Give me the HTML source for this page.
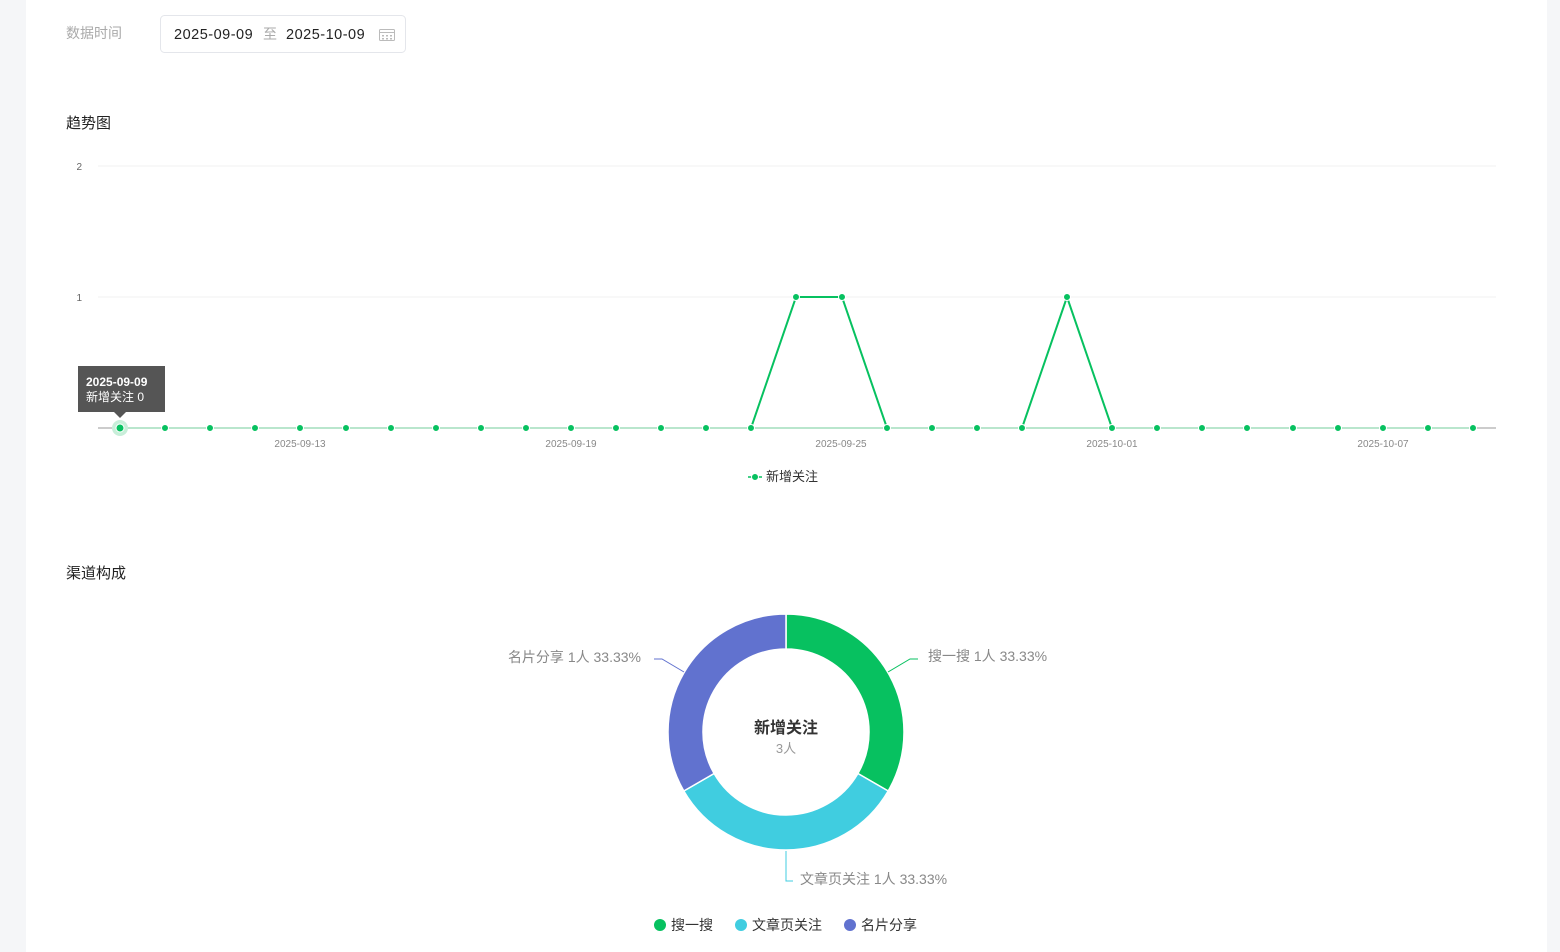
<!DOCTYPE html>
<html><head><meta charset="utf-8"><style>
body{margin:0;width:1560px;height:952px;background:#f5f6f8;font-family:"Liberation Sans","Noto Sans CJK SC",sans-serif;overflow:hidden}
.main{position:absolute;left:26px;top:0;width:1521px;height:952px;background:#fff}
</style></head><body>
<div class="main"></div>
<svg width="1560" height="952" style="position:absolute;left:0;top:0" font-family="Liberation Sans, Noto Sans CJK SC, sans-serif">
<text x="66" y="38" font-size="14" fill="#aaa">数据时间</text>
<rect x="160.5" y="15.5" width="245" height="37" rx="4" fill="#fff" stroke="#e4e6eb"/>
<text x="174" y="39" font-size="14.5" fill="#222" letter-spacing="0.5">2025-09-09</text>
<text x="263" y="39" font-size="14" fill="#aaa">至</text>
<text x="286" y="39" font-size="14.5" fill="#222" letter-spacing="0.5">2025-10-09</text>
<g stroke="#bbb" fill="none"><rect x="379.5" y="29.5" width="15" height="11" rx="1"/><line x1="379.5" y1="32.5" x2="394.5" y2="32.5"/></g>
<g fill="#bbb"><rect x="382" y="35" width="2" height="1.5"/><rect x="386" y="35" width="2" height="1.5"/><rect x="390" y="35" width="2" height="1.5"/><rect x="382" y="38" width="2" height="1.5"/><rect x="386" y="38" width="2" height="1.5"/><rect x="390" y="38" width="2" height="1.5"/></g>
<text x="66" y="128" font-size="15" fill="#222">趋势图</text>
<line x1="98" y1="166" x2="1496" y2="166" stroke="#f0f0f0"/>
<line x1="98" y1="297" x2="1496" y2="297" stroke="#f0f0f0"/>
<line x1="98" y1="428" x2="1496" y2="428" stroke="#bbb" stroke-width="1.5"/>
<text x="82" y="170" font-size="10" fill="#666" text-anchor="end">2</text>
<text x="82" y="301" font-size="10" fill="#666" text-anchor="end">1</text>
<g font-size="10" fill="#888" text-anchor="middle">
<text x="300" y="447">2025-09-13</text><text x="571" y="447">2025-09-19</text><text x="841" y="447">2025-09-25</text><text x="1112" y="447">2025-10-01</text><text x="1383" y="447">2025-10-07</text></g>
<line x1="120" y1="428" x2="1473" y2="428" stroke="#b9e6cd" stroke-width="2"/>
<polyline fill="none" stroke="#07c160" stroke-width="2" points="751,428 796,297 842,297 887,428"/>
<polyline fill="none" stroke="#07c160" stroke-width="2" points="1022,428 1067,297 1112,428"/>
<circle cx="120" cy="428" r="8" fill="#c8eed9"/>
<g fill="#07c160" stroke="#fff" stroke-width="1">
<circle cx="120" cy="428" r="4"/><circle cx="165" cy="428" r="3.5"/><circle cx="210" cy="428" r="3.5"/><circle cx="255" cy="428" r="3.5"/><circle cx="300" cy="428" r="3.5"/><circle cx="346" cy="428" r="3.5"/><circle cx="391" cy="428" r="3.5"/><circle cx="436" cy="428" r="3.5"/><circle cx="481" cy="428" r="3.5"/><circle cx="526" cy="428" r="3.5"/><circle cx="571" cy="428" r="3.5"/><circle cx="616" cy="428" r="3.5"/><circle cx="661" cy="428" r="3.5"/><circle cx="706" cy="428" r="3.5"/><circle cx="751" cy="428" r="3.5"/><circle cx="796" cy="297" r="3.5"/><circle cx="842" cy="297" r="3.5"/><circle cx="887" cy="428" r="3.5"/><circle cx="932" cy="428" r="3.5"/><circle cx="977" cy="428" r="3.5"/><circle cx="1022" cy="428" r="3.5"/><circle cx="1067" cy="297" r="3.5"/><circle cx="1112" cy="428" r="3.5"/><circle cx="1157" cy="428" r="3.5"/><circle cx="1202" cy="428" r="3.5"/><circle cx="1247" cy="428" r="3.5"/><circle cx="1293" cy="428" r="3.5"/><circle cx="1338" cy="428" r="3.5"/><circle cx="1383" cy="428" r="3.5"/><circle cx="1428" cy="428" r="3.5"/><circle cx="1473" cy="428" r="3.5"/></g>
<rect x="78" y="366" width="87" height="46" fill="#555"/>
<path d="M114,412 L120,418 L126,412Z" fill="#555"/>
<text x="86" y="386" font-size="12" font-weight="bold" fill="#fff">2025-09-09</text>
<text x="86" y="401" font-size="12" fill="#fff">新增关注 0</text>
<line x1="748" y1="477" x2="762" y2="477" stroke="#07c160" stroke-width="1.5"/><circle cx="755" cy="477" r="3.5" fill="#07c160" stroke="#fff"/>
<text x="766" y="481" font-size="13" fill="#333">新增关注</text>
<text x="66" y="578" font-size="15" fill="#222">渠道构成</text>
<g stroke="#fff" stroke-width="1.5">
<path d="M786,614 A118,118 0 0 1 888.2,791 L857.9,773.5 A83,83 0 0 0 786,649Z" fill="#07c160"/>
<path d="M888.2,791 A118,118 0 0 1 683.8,791 L714.1,773.5 A83,83 0 0 0 857.9,773.5Z" fill="#40cde0"/>
<path d="M683.8,791 A118,118 0 0 1 786,614 L786,649 A83,83 0 0 0 714.1,773.5Z" fill="#6172cf"/></g>
<polyline points="888,672 910,659 918,659" fill="none" stroke="#07c160"/>
<polyline points="684,672 662,659 654,659" fill="none" stroke="#6172cf"/>
<polyline points="786,851 786,881 793,881" fill="none" stroke="#40cde0"/>
<text x="928" y="661" font-size="14" fill="#888">搜一搜 1人 33.33%</text>
<text x="641" y="662" font-size="14" fill="#888" text-anchor="end">名片分享 1人 33.33%</text>
<text x="800" y="884" font-size="14" fill="#888">文章页关注 1人 33.33%</text>
<text x="786" y="733" font-size="16" font-weight="bold" fill="#333" text-anchor="middle">新增关注</text>
<text x="786" y="753" font-size="13" fill="#999" text-anchor="middle">3人</text>
<circle cx="660" cy="925" r="6" fill="#07c160"/><text x="671" y="930" font-size="14" fill="#333">搜一搜</text>
<circle cx="741" cy="925" r="6" fill="#40cde0"/><text x="752" y="930" font-size="14" fill="#333">文章页关注</text>
<circle cx="850" cy="925" r="6" fill="#6172cf"/><text x="861" y="930" font-size="14" fill="#333">名片分享</text>
</svg>
</body></html>
